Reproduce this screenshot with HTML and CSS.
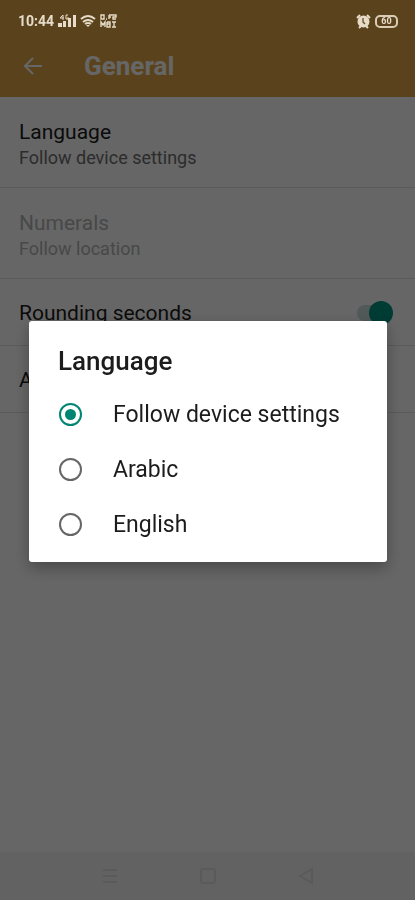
FILE: index.html
```
<!DOCTYPE html>
<html lang="en">
<head>
    <meta charset="UTF-8">
    <meta name="viewport" content="width=device-width, initial-scale=1.0">
    <title>General</title>
    <link rel="stylesheet" href="styles.css">
</head>
<body>
    <header>
        <div class="status-bar">
            <span class="time">10:44</span>
            <svg class="signal" width="18" height="14" viewBox="0 0 18 14" fill="currentColor">
                <path d="M0 9h4v4H0zM5 7h3v6H5zM10 4h3v9h-3zM15 1h3v12h-3z"/>
                <path d="M2 4l3-3v5M2 4h4M10 1H8v4h2V3" fill="none" stroke="currentColor"/>
            </svg>
            <svg width="16" height="14" viewBox="0 0 16 14" fill="none" stroke="currentColor" stroke-width="2">
                <path d="M1 5q7-6 14 0M3 8q5-4 10 0M5 10q3-2 6 0"/>
                <path d="M6 11h4l-2 2z" fill="currentColor" stroke="none"/>
            </svg>
            <svg width="17" height="14" viewBox="0 0 17 14" fill="none" stroke="currentColor" stroke-width="1.4">
                <path d="M1 1h3v4H1zM6 5h1M9 1v4M9 1h3M9 3h2M12 1h4v2h-3v2h3M1 13V8l2 3 2-3v5M7 8v5h3V8H7M7 10h3M12 8h4M14 8v5M12 13h4"/>
            </svg>
            <svg class="alarm" width="15" height="15" viewBox="0 0 15 15">
                <path d="M1 4l3-3M14 4l-3-3M3 14l2-2M12 14l-2-2" stroke="currentColor" stroke-width="2"/>
                <circle cx="7.5" cy="7.5" r="6" fill="currentColor"/>
                <path d="M7 4v4l2 2" fill="none" stroke="#5a431c" stroke-width="1.2"/>
            </svg>
            <span class="battery">60</span>
        </div>
        <div class="app-bar">
            <a href="#" class="back" aria-label="Back">
                <svg width="20" height="20" viewBox="0 0 20 20" fill="none" stroke="currentColor" stroke-width="2">
                    <path d="M19 10H2M10 2l-8 8 8 8"/>
                </svg>
            </a>
            <h1>General</h1>
        </div>
    </header>

    <main>
        <div class="setting">
            <div class="name">Language</div>
            <div class="value">Follow device settings</div>
        </div>
        <div class="setting disabled">
            <div class="name">Numerals</div>
            <div class="value">Follow location</div>
        </div>
        <div class="setting single">
            <label class="name" for="rounding">Rounding seconds</label>
            <input type="checkbox" id="rounding" class="switch" checked>
        </div>
        <div class="setting single">
            <div class="name">A</div>
        </div>
    </main>

    <nav>
        <button aria-label="Recent apps">
            <svg width="16" height="18" viewBox="0 0 16 18" fill="none" stroke="currentColor" stroke-width="2"><path d="M1 3h14M1 9h14M1 15h14"/></svg>
        </button>
        <button aria-label="Home">
            <svg width="16" height="18" viewBox="0 0 16 18" fill="none" stroke="currentColor" stroke-width="2"><rect x="1" y="2" width="14" height="14" rx="2"/></svg>
        </button>
        <button aria-label="Back">
            <svg width="16" height="18" viewBox="0 0 16 18" fill="none" stroke="currentColor" stroke-width="2"><path d="M14 2v14L2 9z"/></svg>
        </button>
    </nav>

    <div class="overlay">
        <form class="dialog" role="dialog" aria-labelledby="dialog-title">
            <h2 id="dialog-title">Language</h2>
            <label><input type="radio" name="language" checked> Follow device settings</label>
            <label><input type="radio" name="language"> Arabic</label>
            <label><input type="radio" name="language"> English</label>
        </form>
    </div>
</body>
</html>
```
FILE: styles.css
```
* { box-sizing: border-box; }
body {
    margin: 0;
    min-height: 100vh;
    display: flex;
    flex-direction: column;
    background: #fff;
    color: #1c1c1c;
    font-family: Roboto, sans-serif;
}

header { background: #e1a746; }
.status-bar {
    position: relative;
    z-index: 2;
    display: flex;
    align-items: center;
    gap: 4px;
    height: 42px;
    padding: 0 17px 0 18px;
    color: #e6dcc8;
}
.time { font-size: 14px; font-weight: bold; }
.alarm { margin-left: auto; }
.battery {
    width: 23px;
    height: 13px;
    border: 2px solid #d8ccb4;
    border-radius: 5px;
    font-size: 9px;
    font-weight: bold;
    line-height: 9px;
    text-align: center;
}
.app-bar {
    display: flex;
    align-items: center;
    height: 55px;
    padding: 0 23px 7px;
    color: #fff;
}
.back { display: flex; width: 61px; color: inherit; }
h1 { margin: 0; font-size: 26px; font-weight: bold; }

main { flex: 1; }
.setting {
    padding: 21px 19px 17px;
    border-bottom: 1px solid #e3e3e3;
}
.name { font-size: 21px; line-height: 28px; }
.value { font-size: 18px; line-height: 24px; color: #6e6e6e; }
.disabled .name, .disabled .value { color: #b4b4b4; }
.single {
    display: flex;
    justify-content: space-between;
    align-items: center;
    height: 67px;
    padding: 2px 22px 0 19px;
}
.switch {
    appearance: none;
    display: flex;
    justify-content: flex-end;
    align-items: center;
    width: 36px;
    height: 16px;
    margin: 0;
    border-radius: 8px;
    background: #cbe0dc;
}
.switch::before {
    content: "";
    width: 24px;
    height: 24px;
    border-radius: 50%;
    background: #009682;
}

nav {
    display: flex;
    justify-content: center;
    gap: 82px;
    height: 48px;
    background: #f6f6f6;
}
nav button {
    display: flex;
    align-items: center;
    padding: 0;
    border: 0;
    background: none;
    color: #e2e2e2;
}

/* language picker */
.overlay {
    position: fixed;
    inset: 0;
    display: flex;
    align-items: center;
    padding: 30px 28px 48px 29px;
    background: rgba(0, 0, 0, 0.6);
}
.dialog {
    width: 100%;
    padding: 24px 28px 10px 29px;
    border-radius: 3px;
    background: #fff;
    box-shadow: 0 6px 16px rgba(0, 0, 0, 0.3);
}
h2 { margin: 0 0 10px; font-size: 26px; font-weight: 500; line-height: 32px; }
.dialog label {
    display: flex;
    align-items: center;
    gap: 31px;
    height: 55px;
    font-size: 23px;
}
.dialog input {
    appearance: none;
    display: grid;
    place-items: center;
    width: 23px;
    height: 23px;
    margin: 0 0 0 1px;
    border: 2px solid #666;
    border-radius: 50%;
}
.dialog input:checked { border-color: #008573; }
.dialog input:checked::before {
    content: "";
    width: 11px;
    height: 11px;
    border-radius: 50%;
    background: #008573;
}
```
